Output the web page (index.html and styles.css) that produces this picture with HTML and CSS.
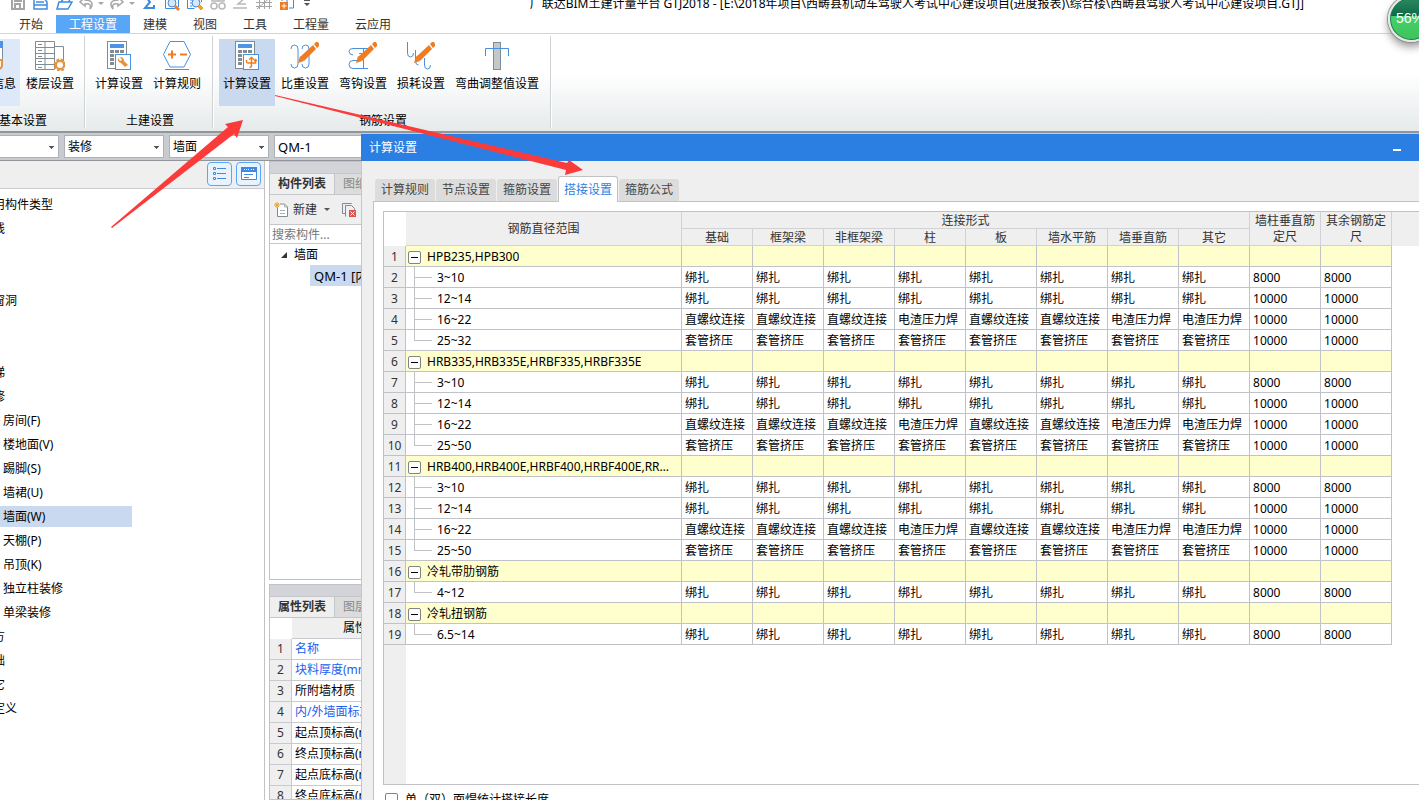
FILE: index.html
```html
<!DOCTYPE html>
<html lang="zh-CN">
<head>
<meta charset="UTF-8" />
<meta name="viewport" content="width=device-width, initial-scale=1" />
<title>广联达BIM土建计量平台 GTJ2018</title>
<link rel="stylesheet" href="styles.css">
</head>
<body>
<svg class="defs" width="0" height="0">
  <defs>
    <g id="calc">
      <rect x="3.5" y=".5" width="19" height="27" fill="#fff" stroke="#808c94"/>
      <path d="M6 3h14v4H6z" fill="#4f94e4"/>
      <path d="M6 9h4v3H6zM11 9h4v3h-4zM16 9h4v3h-4zM6 13h4v3H6zM6 17h4v3H6zM6 21h4v3H6z" fill="#808c94"/>
      <rect x="11.5" y="13.5" width="15" height="15" fill="#fff" stroke="#4a90e0"/>
    </g>
    <g id="pencil">
      <path d="M8 22l2-7 4 5z" fill="#f07c22"/>
      <path d="M10 16L23 4l3 4-12 12z" fill="#f07c22"/>
      <path d="M24 3l2-2h2l1 2v2l-2 2z" fill="#f07c22"/>
    </g>
  </defs>
</svg>

<div class="app">
  <header class="quickbar">
    <div class="quick-icons">
      <svg width="18" height="18" viewBox="0 0 18 18" fill="none" stroke="#a5a5a5" stroke-width="2"><path d="M3 1v13h12V1M6 14V9h5v5M6 1v5h6V1"/></svg>
      <svg width="18" height="18" viewBox="0 0 18 18" fill="none" stroke="#3f8ae0" stroke-width="1.5"><path d="M2 2v12h13V7l-4-5M2 10h13"/><path d="M4 7h8"/></svg>
      <svg width="18" height="18" viewBox="0 0 18 18" fill="none" stroke="#3f8ae0" stroke-width="1.5"><path d="M2 14L4 7h13l-4 7H2zM6 7l4-5 5 1-1 4"/></svg>
      <svg width="26" height="18" viewBox="0 0 26 18" fill="none" stroke="#a5a5a5" stroke-width="1.5"><path d="M7 2L2 7l5 4V9c5-1 6 1 5 5 4-5 2-9-5-9z"/><path d="M20 7h6l-3 3z" fill="#a5a5a5" stroke="none"/></svg>
      <svg width="26" height="18" viewBox="0 0 26 18" fill="none" stroke="#a5a5a5" stroke-width="1.5"><path d="M9 2l5 5-5 4V9C4 8 3 10 4 14 0 9 2 5 9 5z"/><path d="M20 7h6l-3 3z" fill="#a5a5a5" stroke="none"/></svg>
      <svg width="18" height="18" viewBox="0 0 18 18" fill="none" stroke="#3f8ae0" stroke-width="2"><path d="M14 4V1H5l5 6-5 6h9v-3"/></svg>
      <svg width="18" height="18" viewBox="0 0 18 18" fill="none" stroke="#3f8ae0"><path d="M2.5 1v12.500h10M5 1v3M15.500 1v11M2 4.500h4"/><circle cx="9" cy="8" r="4" fill="#d5e7fb"/><path d="M12 11l4 4" stroke="#f07c22" stroke-width="3"/></svg>
      <svg width="18" height="18" viewBox="0 0 18 18" fill="none" stroke="#3f8ae0"><path d="M1.5 1v12.500h7M4 5h3M4 8h2M4 11h2M15.500 1v6"/><circle cx="10" cy="8" r="4" fill="#d5e7fb"/><path d="M14 10l3 3-2 2-3-3z" stroke="#f0a022" fill="#f0a022"/></svg>
      <svg width="18" height="18" viewBox="0 0 18 18" fill="none" stroke="#b8b8b8" stroke-width="1.5"><path d="M3 1v5h12V1M6 4h6M9 2v4"/><circle cx="5" cy="11" r="3"/><circle cx="13" cy="11" r="3"/></svg>
      <svg width="18" height="18" viewBox="0 0 18 18" fill="none" stroke="#b8b8b8" stroke-width="1.5"><path d="M14 2L6 9h8M1 13h14"/></svg>
      <svg width="18" height="18" viewBox="0 0 18 18" fill="none" stroke="#a5a5a5"><path d="M1 3.500h16M1 7.500h16M1 11.500h16M4.500 1v13M9.500 1v13M14.500 1v13M2 14L16 2"/></svg>
      <svg width="18" height="18" viewBox="0 0 18 18" fill="none"><path d="M4 6V2h5v5M15.500 2v11H11" stroke="#3f8ae0"/><path d="M2 7h8v8H2z" fill="#f07c22"/><path d="M6 8.500v5M3.500 11h5" stroke="#fff"/></svg>
      <svg width="18" height="18" viewBox="0 0 18 18"><path d="M3 5h6v1H3zM3 8h6l-3 3z" fill="#555"/></svg>
    </div>
    <div class="window-title">广联达BIM土建计量平台 GTJ2018 - [E:\2018年项目\西畴县机动车驾驶人考试中心建设项目(进度报表)\综合楼\西畴县驾驶人考试中心建设项目.GTJ]</div>
  </header>

  <nav class="menu">
    <button>开始</button>
    <button class="active">工程设置</button>
    <button>建模</button>
    <button>视图</button>
    <button>工具</button>
    <button>工程量</button>
    <button>云应用</button>
  </nav>

  <section class="ribbon">
    <div class="group">
      <div class="tiles">
        <button class="tile hover">
          <svg width="30" height="30" viewBox="0 0 30 30"><rect x="3.5" y=".5" width="22" height="24" fill="#fff" stroke="#808c94"/><path d="M3 0h23v7H3z" fill="#4f94e4"/><path d="M6 11h15M6 15h15" stroke="#808c94"/><path d="M19 19h6v5q0 4-4 4h-6q3-1 3-4z" fill="#fff" stroke="#e8913a" stroke-width="2"/></svg>
          工程信息
        </button>
        <button class="tile">
          <svg width="30" height="30" viewBox="0 0 30 30" fill="none" stroke="#808c94"><path d="M.5.5h19v28H.5zM10 .5v28M.5 6.500h19M.5 12.500h19M.5 17.500h19M.5 23.500h19M19.500 5.500h9v18M3 3.500h4M3 9.500h4M3 15.500h4M3 20.500h4M3 26.500h4"/><circle cx="25" cy="24" r="5" fill="#fff" stroke="#e8913a" stroke-width="3" stroke-dasharray="2.5 1.43"/><circle cx="25" cy="24" r="4" fill="#fff" stroke="#e8913a" stroke-width="2"/></svg>
          楼层设置
        </button>
      </div>
      <div class="group-name">基本设置</div>
    </div>
    <div class="group">
      <div class="tiles">
        <button class="tile">
          <svg width="30" height="30" viewBox="0 0 30 30"><use href="#calc"/><path d="M14 17q-1 4 3 5l4 4 3-2-4-4q0-4-4-4l2 3-2 1z" fill="#e8913a"/></svg>
          计算设置
        </button>
        <button class="tile">
          <svg width="30" height="30" viewBox="0 0 30 30" fill="none" stroke="#4a90e0"><path d="M8 .5h14l6.500 13L22 26H8L1.500 13.500z"/><path d="M3 28.500h24"/><path d="M6 13.500h8M10 9.500v8M18 13.500h7" stroke="#f07c22" stroke-width="2"/></svg>
          计算规则
        </button>
      </div>
      <div class="group-name">土建设置</div>
    </div>
    <div class="group">
      <div class="tiles">
        <button class="tile active">
          <svg width="30" height="30" viewBox="0 0 30 30"><use href="#calc"/><path d="M14.500 19v2q0 1 2 1h7V19.500M19.500 16.500v8q0 2-2 2M17 18.500l2.500-2 2.500 2M22 20l1.500-1.500L25 20" fill="none" stroke="#f07c22" stroke-width="1.5"/></svg>
          计算设置
        </button>
        <button class="tile">
          <svg width="30" height="30" viewBox="0 0 30 30" fill="none" stroke="#4a90e0"><path d="M1 8q0-4 3.500-4T8 8v15q0 4-3.500 4T1 23M12 8q0-4 3.500-4T19 8v15q0 4-3.500 4T12 23"/><use href="#pencil" stroke="none"/></svg>
          比重设置
        </button>
        <button class="tile">
          <svg width="30" height="30" viewBox="0 0 30 30" fill="none" stroke="#4a90e0"><path d="M20 7.500H5Q1 7.500 1 10.500T5 14M20 27.500H5q-4 0-4-4t4-4h7M15.500 8v19M11 12.500h9"/><use href="#pencil" stroke="none"/></svg>
          弯钩设置
        </button>
        <button class="tile">
          <svg width="30" height="30" viewBox="0 0 30 30" fill="none" stroke="#4a90e0"><path d="M1.500 1v11q0 4 3 4t3-4M9.500 9v11q0 4 3 4M18.500 17v7q0 4 3 4t3-4"/><use href="#pencil" stroke="none"/></svg>
          损耗设置
        </button>
        <button class="tile wide">
          <svg width="30" height="30" viewBox="0 0 30 30"><rect x="11.5" y="1.5" width="7" height="27" fill="#c4c8ca" stroke="#808c94"/><path d="M3.500 15V7.500h23V15" fill="none" stroke="#4a90e0"/></svg>
          弯曲调整值设置
        </button>
      </div>
      <div class="group-name">钢筋设置</div>
    </div>
  </section>

  <div class="filters">
    <select class="combo" aria-label="楼层"><option></option></select>
    <select class="combo" aria-label="构件分类"><option>装修</option></select>
    <select class="combo" aria-label="构件类型"><option>墙面</option></select>
    <select class="combo large" aria-label="构件"><option>QM-1</option></select>
  </div>

  <main class="workspace">
    <aside class="types">
      <div class="types-bar">
        <button aria-label="列表"><svg width="16" height="16" viewBox="0 0 16 16" fill="none" stroke="#3f8ae0"><path d="M1.500 1.500h2v2h-2zM1.500 6.500h2v2h-2zM1.500 11.500h2v2h-2zM5 2.500h9M5 7.500h9M5 12.500h9"/></svg></button>
        <button aria-label="面板"><svg width="16" height="16" viewBox="0 0 16 16" fill="none" stroke="#3f8ae0"><path d="M.5 1.500h15v12H.5z" fill="#fff"/><path d="M0 1h16v5H0z" fill="#3f8ae0" stroke="none"/><path d="M3 3.500h5M10 3.500h4" stroke="#fff" stroke-dasharray="1 1"/><path d="M3 8.500h9M3 11.500h5"/></svg></button>
      </div>
      <ul class="type-list">
        <li>常用构件类型</li>
        <li>轴线</li>
        <li></li>
        <li></li>
        <li>门窗洞</li>
        <li></li>
        <li></li>
        <li>楼梯</li>
        <li>装修</li>
        <li class="child">房间(F)</li>
        <li class="child">楼地面(V)</li>
        <li class="child">踢脚(S)</li>
        <li class="child">墙裙(U)</li>
        <li class="child selected">墙面(W)</li>
        <li class="child">天棚(P)</li>
        <li class="child">吊顶(K)</li>
        <li class="child">独立柱装修</li>
        <li class="child">单梁装修</li>
        <li>土方</li>
        <li>基础</li>
        <li>其它</li>
        <li>自定义</li>
      </ul>
    </aside>

    <div class="docks">
      <section class="dock components">
        <div class="dock-grip"></div>
        <div class="dock-tabs"><button class="active">构件列表</button><button>图纸管理</button></div>
        <div class="dock-tools">
          <button><svg width="16" height="16" viewBox="0 0 16 16" fill="none"><path d="M3.500 5v9.500h10V5l-3-3H6" fill="#fff" stroke="#808c94"/><path d="M10.500 2v3h3M6 8.500h5M6 11.500h5" stroke="#a8b0b5"/><path d="M3 0v6M0 3h6M1 1l4 4M5 1L1 5" stroke="#f0a022"/></svg>新建<span class="caret"></span></button>
          <button aria-label="删除"><svg width="16" height="16" viewBox="0 0 16 16" fill="none" stroke="#808c94"><path d="M10.500 2V1.500h-9v10H4M4.500 14.500v-11h6l3 3V9"/><path d="M8 8h7v7H8z" fill="#d9534f" stroke="none"/><path d="M9.500 9.500l4 4M13.500 9.500l-4 4" stroke="#fff"/></svg></button>
        </div>
        <input class="search" type="text" placeholder="搜索构件..." aria-label="搜索构件">
        <ul class="tree">
          <li><svg width="8" height="8" viewBox="0 0 8 8"><path d="M7 1v6H1z" fill="#333"/></svg>墙面</li>
          <li class="leaf">QM-1 [内墙面]</li>
        </ul>
      </section>
      <section class="dock props">
        <div class="dock-grip"></div>
        <div class="dock-tabs"><button class="active">属性列表</button><button>图层管理</button></div>
        <table class="prop-table">
          <thead><tr><th class="corner"></th><th>属性名称</th></tr></thead>
          <tbody>
            <tr><td>1</td><td class="blue">名称</td></tr>
            <tr><td>2</td><td class="blue">块料厚度(mm)</td></tr>
            <tr><td>3</td><td>所附墙材质</td></tr>
            <tr><td>4</td><td class="blue">内/外墙面标志</td></tr>
            <tr><td>5</td><td>起点顶标高(m)</td></tr>
            <tr><td>6</td><td>终点顶标高(m)</td></tr>
            <tr><td>7</td><td>起点底标高(m)</td></tr>
            <tr><td>8</td><td>终点底标高(m)</td></tr>
          </tbody>
        </table>
      </section>
    </div>
  </main>

  <div class="dialog" role="dialog" aria-label="计算设置">
    <div class="dialog-title"><span>计算设置</span><button aria-label="最小化"></button></div>
    <div class="tabs">
      <button>计算规则</button>
      <button>节点设置</button>
      <button>箍筋设置</button>
      <button class="active">搭接设置</button>
      <button>箍筋公式</button>
    </div>
    <div class="pane">
      <div class="grid-wrap">
        <table class="grid">
          <colgroup><col class="c-num"><col class="c-name"><col span="10" class="c-val"></colgroup>
          <thead>
            <tr>
              <th class="corner" rowspan="2"></th>
              <th rowspan="2">钢筋直径范围</th>
              <th colspan="8">连接形式</th>
              <th rowspan="2">墙柱垂直筋定尺</th>
              <th rowspan="2">其余钢筋定尺</th>
            </tr>
            <tr><th>基础</th><th>框架梁</th><th>非框架梁</th><th>柱</th><th>板</th><th>墙水平筋</th><th>墙垂直筋</th><th>其它</th></tr>
          </thead>
          <tbody id="rows"></tbody>
        </table>
      </div>
      <div class="option"><input type="checkbox" id="weld"><label for="weld">单（双）面焊统计搭接长度</label></div>
    </div>
  </div>

  <svg class="arrows" width="600" height="240" viewBox="0 0 600 240" fill="#fb3a3a">
    <path d="M111 227L228 127l-3-3 18-4-6 18-3-4L112 228z"/>
    <path d="M275 95l292 68 2-3 14 10-18 5 1-5L275 96z"/>
  </svg>
  <div class="ball">56%</div>
</div>

<script src="grid.js"></script>
</body>
</html>
```
FILE: grid.js
```js
const groups = [
  { name: "HPB235,HPB300", items: ["3~10", "12~14", "16~22", "25~32"] },
  { name: "HRB335,HRB335E,HRBF335,HRBF335E", items: ["3~10", "12~14", "16~22", "25~50"] },
  { name: "HRB400,HRB400E,HRBF400,HRBF400E,RRB400", items: ["3~10", "12~14", "16~22", "25~50"] },
  { name: "冷轧带肋钢筋", items: ["4~12"] },
  { name: "冷轧扭钢筋", items: ["6.5~14"] }
];

const Z = "直螺纹连接";
const D = "电渣压力焊";

// connection type for each of the 8 member columns
function connections(i) {
  if (i === 2) return [Z, Z, Z, D, Z, Z, D, D];
  return Array(8).fill(i === 3 ? "套管挤压" : "绑扎");
}

let n = 0;
let html = "";
groups.forEach(g => {
  html += `<tr class="group-row"><td>${++n}</td><td><div class="name"><button class="toggle" aria-label="折叠"></button><span>${g.name}</span></div></td>${"<td></td>".repeat(10)}</tr>`;
  g.items.forEach((item, i) => {
    const length = i === 0 ? "8000" : "10000";
    const cells = [...connections(i), length, length].map(v => `<td>${v}</td>`).join("");
    const last = i === g.items.length - 1 ? " last" : "";
    html += `<tr><td>${++n}</td><td class="branch${last}">${item}</td>${cells}</tr>`;
  });
});
document.getElementById("rows").innerHTML = html;
```
FILE: styles.css
```css
* {
  box-sizing: border-box;
}
body {
  margin: 0;
  font: 12px/16px "Noto Sans", "Noto Sans CJK SC", sans-serif;
  color: #000;
  background: #fff;
  overflow: hidden;
}
button {
  font: inherit;
  color: inherit;
  border: 0;
  padding: 0;
  background: none;
  white-space: nowrap;
}
ul {
  list-style: none;
  margin: 0;
  padding: 0;
}
table {
  border-collapse: separate;
  border-spacing: 0;
  table-layout: fixed;
}
th {
  font-weight: normal;
}
.defs {
  position: absolute;
}
.app {
  position: relative;
  display: flex;
  flex-direction: column;
  height: 100vh;
  overflow: hidden;
}

/* title bar */
.quickbar {
  display: flex;
  align-items: flex-end;
  justify-content: space-between;
  height: 15px;
  flex: none;
}
.quick-icons {
  display: flex;
  gap: 5px;
  height: 20px;
  padding-left: 9px;
}
.quick-icons svg {
  flex: none;
}
.window-title {
  height: 19px;
  padding-right: 115px;
  white-space: nowrap;
}

.menu {
  display: flex;
  flex: none;
  height: 19px;
  padding-left: 6px;
  border-bottom: 1px solid #d2d4d6;
  color: #333;
}
.menu button {
  padding: 2px 13px 0;
}
.menu .active {
  background: #58a6f8;
  color: #fff;
}

/* ribbon */
.ribbon {
  display: flex;
  flex: none;
  height: 97px;
  margin-left: -41px;
  padding-top: 2px;
  background: linear-gradient(#fff 40%, #e6eaeb);
}
.group {
  display: flex;
  flex-direction: column;
  height: 92px;
  padding: 3px 6px 0 5px;
  border-right: 1px solid #cfd2d4;
  box-shadow: 1px 0 #fff;
}
.group + .group {
  padding: 3px 7px 0 6px;
}
.tiles {
  display: flex;
  gap: 2px;
}
.tile {
  display: flex;
  flex-direction: column;
  align-items: center;
  gap: 5px;
  width: 56px;
  height: 67px;
  padding-top: 2px;
}
.tile.wide {
  width: 92px;
}
.tile.hover {
  background: #dde9f9;
}
.tile.active {
  background: #c9d9ef;
}
.group-name {
  padding: 7px 0 0 4px;
  text-align: center;
}

.filters {
  display: flex;
  flex: none;
  gap: 5px;
  height: 30px;
  padding-top: 2px;
  margin-left: -41px;
  background: #c8cbd0;
  border-top: 2px solid #929699;
  border-bottom: 1px solid #92969a;
}
.combo {
  appearance: none;
  width: 100px;
  height: 23px;
  padding: 0 3px;
  border: 1px solid #aeb1b5;
  border-radius: 0;
  background: conic-gradient(from -45deg at 50% 100%, #555 90deg, transparent 0) right 4px top 10px / 6px 3px no-repeat, #fff;
  background: linear-gradient(#555, #555) right 4px top 10px / 5px 1px no-repeat,
    linear-gradient(#555, #555) right 5px top 11px / 3px 1px no-repeat,
    linear-gradient(#555, #555) right 6px top 12px / 1px 1px no-repeat, #fff;
  font: inherit;
  color: #000;
}
.combo.large {
  font-size: 13px;
}

/* left panels */
.workspace {
  display: flex;
  flex: 1;
  min-height: 0;
  gap: 4px;
  background: #fff;
}
.types {
  width: 265px;
  border-right: 1px solid #c0c2c6;
}
.types-bar {
  display: flex;
  justify-content: flex-end;
  gap: 4px;
  height: 28px;
  padding: 1px 3px;
  background: #efefef;
  border-bottom: 1px solid #c9cbd0;
}
.types-bar button {
  display: flex;
  align-items: center;
  justify-content: center;
  width: 25px;
  height: 24px;
  border: 1px solid #58a6f8;
  border-radius: 4px;
  background: #e9f3fe;
}
.type-list {
  padding-top: 4px;
}
.type-list li {
  height: 24px;
  padding: 2px 0;
  line-height: 20px;
  margin-left: -19px;
  white-space: nowrap;
}
.type-list .child {
  margin-left: 0;
  padding-left: 3px;
}
.type-list .selected {
  width: 132px;
  background: linear-gradient(#c9d9ef, #c9d9ef) 0 1px / 100% 21px no-repeat;
}
.docks {
  display: flex;
  flex-direction: column;
  gap: 4px;
  flex: 1;
  min-width: 0;
}
.dock {
  border: 1px solid #c0c2c6;
}
.components {
  height: 419px;
}
.props {
  flex: 1;
  min-height: 0;
  overflow: hidden;
}
.dock-grip {
  height: 12px;
  background: #d2d4d9;
  border-bottom: 1px solid #c4c6ca;
}
.dock-tabs {
  display: flex;
  height: 21px;
  background: #dcdcdc;
  border-bottom: 1px solid #c4c6ca;
}
.dock-tabs button {
  padding: 0 8px;
  color: #888;
}
.dock-tabs .active {
  background: #efefef;
  border-right: 1px solid #c4c6ca;
  color: #333;
  font-weight: bold;
}
.dock-tools {
  display: flex;
  align-items: center;
  gap: 11px;
  height: 30px;
  padding-left: 4px;
  background: #efefef;
  border-bottom: 1px solid #c4c6ca;
  color: #333;
}
.dock-tools button {
  display: flex;
  align-items: center;
  gap: 3px;
}
.caret {
  margin-left: 4px;
  border: 3px solid transparent;
  border-top-color: #555;
  border-bottom: 0;
}
.search {
  display: block;
  width: 100%;
  height: 19px;
  padding: 0 2px;
  border: 0;
  border-bottom: 1px solid #c4c6ca;
  font: inherit;
}
.search::placeholder {
  color: #777;
}
.tree li {
  display: flex;
  align-items: center;
  gap: 6px;
  height: 21px;
  padding-left: 10px;
  white-space: nowrap;
}
.tree .leaf {
  margin-left: 40px;
  padding-left: 4px;
  background: #c9d9ef;
  font-size: 13px;
}
.prop-table {
  width: 172px;
}
.prop-table th,
.prop-table td {
  height: 21px;
  padding: 0 3px;
  border-bottom: 1px solid #c8cacf;
  white-space: nowrap;
}
.prop-table th {
  background: #efefef;
}
.prop-table .corner {
  width: 22px;
  background: #fff;
  border: 0;
}
.prop-table td:first-child {
  padding: 0;
  text-align: center;
  color: #333;
  background: #efefef;
  border-right: 1px solid #c8cacf;
}
.prop-table .blue {
  color: #1a5ef0;
}

/* settings window, floats over the main window and runs past its bottom edge */
.dialog {
  position: absolute;
  left: 361px;
  right: 0;
  top: 134px;
  bottom: -12px;
  display: flex;
  flex-direction: column;
  background: #efefef;
  border-left: 1px solid #c4c6ca;
}
.dialog-title {
  display: flex;
  align-items: center;
  justify-content: space-between;
  flex: none;
  height: 27px;
  margin-left: -1px;
  padding: 0 18px 0 8px;
  background: #2c7fe2;
  color: #fff;
}
.dialog-title button {
  width: 8px;
  height: 6px;
  border-bottom: 2px solid #fff;
}
.tabs {
  display: flex;
  align-items: flex-end;
  gap: 1px;
  height: 40px;
  flex: none;
  padding-left: 13px;
}
.tabs button {
  width: 60px;
  height: 22px;
  border-radius: 3px 3px 0 0;
  background: #dcdcdc;
  color: #444;
}
.tabs .active {
  z-index: 1;
  height: 26px;
  margin-bottom: -1px;
  border: 1px solid #c0c2c6;
  border-bottom: 0;
  background: #fff;
  color: #2c7fe2;
}
.pane {
  display: flex;
  flex-direction: column;
  flex: 1;
  min-height: 0;
  margin-left: 11px;
  padding: 9px 0 0 9px;
  border: 1px solid #c0c2c6;
  border-width: 1px 0 0 1px;
  background: #fff;
}
.grid-wrap {
  flex: 1;
  min-height: 0;
  overflow: hidden;
  border: 1px solid #c0c2c6;
  border-right: 0;
  background: linear-gradient(#efefef, #efefef) 0 0 / 100% 34px no-repeat,
    linear-gradient(#efefef, #efefef) 0 0 / 22px 100% no-repeat;
}
.grid {
  width: 1008px;
}
.c-num {
  width: 22px;
}
.c-name {
  width: 276px;
}
.c-val {
  width: 71px;
}
.grid th,
.grid td {
  padding: 1px 3px 0;
  border-right: 1px solid #c0c2c8;
  border-bottom: 1px solid #c0c2c8;
  white-space: nowrap;
}
.grid th {
  height: 17px;
  padding: 1px 2px 0;
  background: #efefef;
  border-color: #d0d2d6;
  color: #333;
  line-height: 15px;
  white-space: normal;
}
.grid th[rowspan] {
  line-height: 16px;
}
.grid .corner {
  background: #fff;
  border: 0;
}
.grid td {
  height: 21px;
  padding-top: 2px;
  background: #fff;
}
.grid td:first-child {
  padding: 2px 0 0;
  text-align: center;
  color: #333;
  background: #efefef;
}
.grid .group-row td:not(:first-child) {
  background: #ffffcd;
}
.name {
  display: flex;
  align-items: center;
  gap: 6px;
  margin-left: -1px;
  padding-right: 5px;
}
.name span {
  overflow: hidden;
  text-overflow: ellipsis;
}
.toggle {
  flex: none;
  width: 13px;
  height: 13px;
  border: 1px solid #808488;
  border-radius: 2px;
  background: linear-gradient(#000, #000) center / 7px 1px no-repeat, #fff;
}
.grid .branch {
  padding-left: 31px;
  background: linear-gradient(#c0c2c8, #c0c2c8) 8px 0 / 1px 100% no-repeat,
    linear-gradient(#c0c2c8, #c0c2c8) 8px 10px / 18px 1px no-repeat, #fff;
}
.grid .branch.last {
  background-size: 1px 10px, 18px 1px, auto;
}
.option {
  display: flex;
  align-items: center;
  flex: none;
  gap: 7px;
  height: 27px;
  padding: 2px 0 0 2px;
}
.option input {
  appearance: none;
  width: 13px;
  height: 13px;
  margin: 0;
  border: 1px solid #808488;
  border-radius: 2px;
  background: #fff;
}

/* annotation arrows and floating meter */
.arrows {
  position: absolute;
  left: 0;
  top: 0;
  pointer-events: none;
}
.ball {
  position: absolute;
  right: -15px;
  top: -4px;
  width: 46px;
  height: 46px;
  padding-left: 6px;
  border: 2px solid #e4e8e6;
  border-radius: 50%;
  background: linear-gradient(#2c8a62, #0c6a48 42%, #45d069 43%, #3fc25c);
  box-shadow: inset 0 0 0 1px #1a7a50, 0 0 1px 1px #8a8a8a, 0 5px 8px #999;
  color: #fff;
  font: 14px/40px "Liberation Sans", sans-serif;
}
```
